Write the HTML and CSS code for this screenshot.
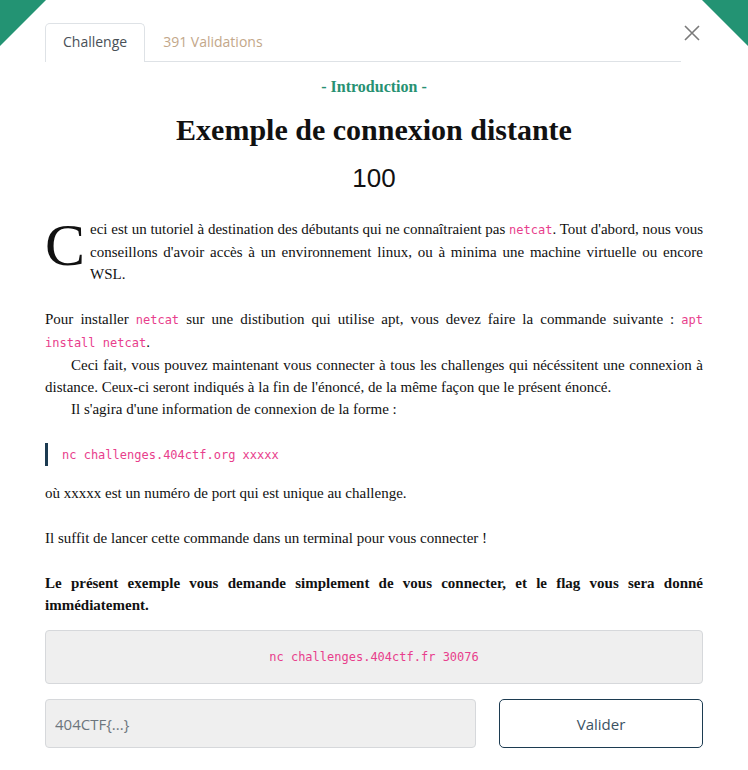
FILE: index.html
```html
<!DOCTYPE html>
<html lang="fr">
<head>
<meta charset="utf-8">
<title>Challenge</title>
<link rel="stylesheet" href="styles.css">
</head>
<body>
<div class="modal">
  <div class="corner corner-left"></div>
  <div class="corner corner-right"></div>

  <div class="header">
    <div class="tabs">
      <div class="tab active">Challenge</div>
      <div class="tab">391 Validations</div>
    </div>
    <button class="close" aria-label="Fermer">
      <svg width="16" height="16" viewBox="0 0 16 16"><path d="M1 1 L15 15 M15 1 L1 15" stroke="#7a7a7a" stroke-width="1.6" fill="none"/></svg>
    </button>
  </div>

  <div class="category">- Introduction -</div>
  <h1 class="title">Exemple de connexion distante</h1>
  <div class="points">100</div>

  <div class="desc">
    <p class="first"><span class="dropcap">C</span>eci est un tutoriel à destination des débutants qui ne connaîtraient pas <code>netcat</code>. Tout d'abord, nous vous conseillons d'avoir accès à un environnement linux, ou à minima une machine virtuelle ou encore WSL.</p>

    <div class="group">
      <p>Pour installer <code>netcat</code> sur une distibution qui utilise apt, vous devez faire la commande suivante : <code>apt install netcat</code>.</p>
      <p class="indent">Ceci fait, vous pouvez maintenant vous connecter à tous les challenges qui nécéssitent une connexion à distance. Ceux-ci seront indiqués à la fin de l'énoncé, de la même façon que le présent énoncé.</p>
      <p class="indent">Il s'agira d'une information de connexion de la forme :</p>
    </div>

    <blockquote class="quote"><code>nc challenges.404ctf.org xxxxx</code></blockquote>

    <p>où xxxxx est un numéro de port qui est unique au challenge.</p>
    <p>Il suffit de lancer cette commande dans un terminal pour vous connecter !</p>
    <p class="strong">Le présent exemple vous demande simplement de vous connecter, et le flag vous sera donné immédiatement.</p>
  </div>

  <div class="conn"><code>nc challenges.404ctf.fr 30076</code></div>

  <form class="flag-form">
    <input class="flag-input" type="text" placeholder="404CTF{...}">
    <button class="submit" type="button">Valider</button>
  </form>
</div>
</body>
</html>
```
FILE: styles.css
```css
html, body {
  margin: 0;
  padding: 0;
  background: #ffffff;
}
body {
  font-family: "Liberation Serif", "Times New Roman", serif;
  color: #111;
}
.modal {
  position: relative;
  width: 748px;
  height: 770px;
  box-sizing: border-box;
  padding: 23px 45px 0 45px;
  overflow: hidden;
}
.corner {
  position: absolute;
  top: 0;
  width: 0;
  height: 0;
  border-style: solid;
}
.corner-left {
  left: 0;
  border-width: 46px 46px 0 0;
  border-color: #239373 transparent transparent transparent;
}
.corner-right {
  right: 0;
  border-width: 0 46px 46px 0;
  border-color: transparent #239373 transparent transparent;
}
.header {
  display: flex;
  align-items: flex-start;
}
.tabs {
  display: flex;
  flex: 1;
  border-bottom: 1px solid #dee2e6;
  font-family: "Open Sans", "Liberation Sans", sans-serif;
  font-size: 14px;
}
.tab {
  height: 37px;
  line-height: 36px;
  padding: 0 17px;
  border: 1px solid transparent;
  border-bottom: none;
  border-radius: 5px 5px 0 0;
  color: #c3a789;
  margin-bottom: -1px;
}
.tab.active {
  color: #495057;
  background: #fff;
  border-color: #dee2e6;
  height: 38px;
}
.close {
  width: 22px;
  height: 22px;
  padding: 0;
  margin: -1px 0 0 0;
  border: none;
  background: none;
  display: flex;
  align-items: center;
  justify-content: center;
}
.category {
  text-align: center;
  color: #279172;
  font-weight: bold;
  font-size: 16px;
  margin-top: 15px;
  line-height: 20px;
}
.title {
  text-align: center;
  font-size: 30px;
  font-weight: bold;
  margin: 14px 0 0 0;
  line-height: 38px;
}
.points {
  text-align: center;
  font-family: "Liberation Sans", Arial, sans-serif;
  font-size: 26px;
  margin-top: 14px;
  line-height: 30px;
}
.desc {
  margin-top: 25px;
  font-size: 15px;
  line-height: 22px;
  text-align: justify;
}
.desc p {
  margin: 0 0 23px 0;
}
.desc .group {
  margin-bottom: 23px;
}
.desc .group p {
  margin: 0;
}
.desc .indent {
  text-indent: 26px;
}
.dropcap {
  float: left;
  font-size: 60px;
  line-height: 46px;
  margin: 4px 5px 0 0;
}
code {
  font-family: "DejaVu Sans Mono", "Liberation Mono", monospace;
  font-size: 12px;
  color: #e83e8c;
}
.quote {
  margin: 0 0 16px 0;
  padding-left: 14px;
  border-left: 3px solid #1c3b51;
  line-height: 22px;
}
.strong {
  font-weight: bold;
}
.desc p.strong {
  margin-bottom: 14px;
}
.conn {
  height: 52px;
  background: #efefef;
  border: 1px solid #d6d8db;
  border-radius: 4px;
  display: flex;
  align-items: center;
  justify-content: center;
}
.flag-form {
  display: flex;
  gap: 23px;
  margin-top: 15px;
}
.flag-input {
  width: 431px;
  height: 49px;
  box-sizing: border-box;
  background: #efefef;
  border: 1px solid #d6d8db;
  border-radius: 4px;
  padding: 0 9px;
  font-family: "Open Sans", "Liberation Sans", sans-serif;
  font-size: 15px;
  color: #495057;
}
.flag-input::placeholder {
  color: #6c757d;
}
.submit {
  flex: 1;
  height: 49px;
  background: #fff;
  border: 1px solid #1c3b51;
  border-radius: 5px;
  font-family: "Open Sans", "Liberation Sans", sans-serif;
  font-size: 15px;
  color: #3b5263;
}
```
